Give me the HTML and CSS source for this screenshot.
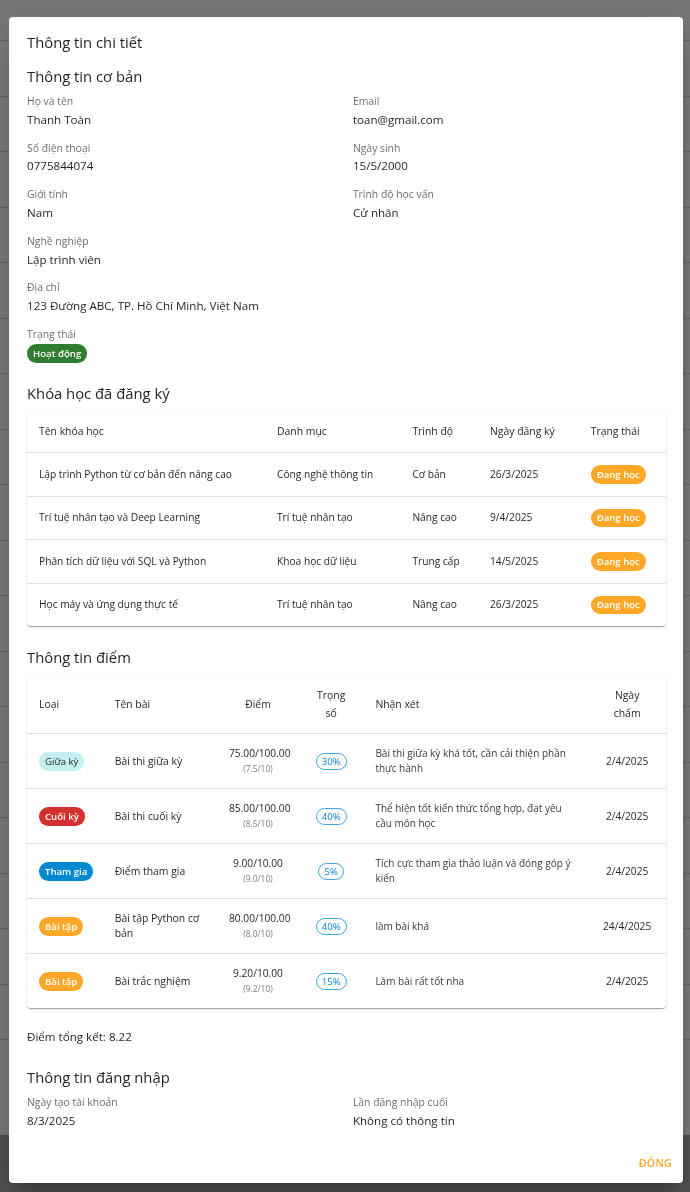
FILE: index.html
```html
<!DOCTYPE html>
<html lang="vi">
<head>
<meta charset="utf-8">
<title>Thông tin chi tiết</title>
<link rel="stylesheet" href="styles.css">
</head>
<body>
<div class="page">
  <div class="page-head"></div>
  <div class="page-row"></div><div class="page-row"></div><div class="page-row"></div><div class="page-row"></div>
  <div class="page-row"></div><div class="page-row"></div><div class="page-row"></div><div class="page-row"></div>
  <div class="page-row"></div><div class="page-row"></div><div class="page-row"></div><div class="page-row"></div>
  <div class="page-row"></div><div class="page-row"></div><div class="page-row"></div><div class="page-row"></div>
  <div class="page-row"></div><div class="page-row"></div>
</div>

<div class="backdrop">
  <div class="dialog">
    <h2 class="dialog-title">Thông tin chi tiết</h2>
    <div class="dialog-content">
      <section class="section">
        <h3 class="section-title">Thông tin cơ bản</h3>
        <div class="fields">
          <div class="field"><div class="label">Họ và tên</div><div class="value">Thanh Toàn</div></div>
          <div class="field"><div class="label">Email</div><div class="value">toan@gmail.com</div></div>
          <div class="field"><div class="label">Số điện thoại</div><div class="value">0775844074</div></div>
          <div class="field"><div class="label">Ngày sinh</div><div class="value">15/5/2000</div></div>
          <div class="field"><div class="label">Giới tính</div><div class="value">Nam</div></div>
          <div class="field"><div class="label">Trình độ học vấn</div><div class="value">Cử nhân</div></div>
          <div class="field"><div class="label">Nghề nghiệp</div><div class="value">Lập trình viên</div></div>
          <div class="field"></div>
          <div class="field full"><div class="label">Địa chỉ</div><div class="value">123 Đường ABC, TP. Hồ Chí Minh, Việt Nam</div></div>
          <div class="field full"><div class="label">Trạng thái</div><div class="chip-line"><span class="chip chip-green">Hoạt động</span></div></div>
        </div>
      </section>

      <section class="section">
        <h3 class="section-title">Khóa học đã đăng ký</h3>
        <div class="card">
          <table class="table courses">
            <colgroup>
              <col class="c-name"><col class="c-cat"><col class="c-level"><col class="c-date"><col class="c-status">
            </colgroup>
            <thead>
              <tr><th>Tên khóa học</th><th>Danh mục</th><th>Trình độ</th><th>Ngày đăng ký</th><th>Trạng thái</th></tr>
            </thead>
            <tbody>
              <tr><td>Lập trình Python từ cơ bản đến nâng cao</td><td>Công nghệ thông tin</td><td>Cơ bản</td><td>26/3/2025</td><td><span class="chip chip-orange">Đang học</span></td></tr>
              <tr><td>Trí tuệ nhân tạo và Deep Learning</td><td>Trí tuệ nhân tạo</td><td>Nâng cao</td><td>9/4/2025</td><td><span class="chip chip-orange">Đang học</span></td></tr>
              <tr><td>Phân tích dữ liệu với SQL và Python</td><td>Khoa học dữ liệu</td><td>Trung cấp</td><td>14/5/2025</td><td><span class="chip chip-orange">Đang học</span></td></tr>
              <tr><td>Học máy và ứng dụng thực tế</td><td>Trí tuệ nhân tạo</td><td>Nâng cao</td><td>26/3/2025</td><td><span class="chip chip-orange">Đang học</span></td></tr>
            </tbody>
          </table>
        </div>
      </section>

      <section class="section">
        <h3 class="section-title">Thông tin điểm</h3>
        <div class="card">
          <table class="table scores">
            <colgroup>
              <col class="s-type"><col class="s-name"><col class="s-score"><col class="s-weight"><col class="s-note"><col class="s-date">
            </colgroup>
            <thead>
              <tr><th>Loại</th><th>Tên bài</th><th class="center">Điểm</th><th class="center">Trọng số</th><th>Nhận xét</th><th class="center">Ngày chấm</th></tr>
            </thead>
            <tbody>
              <tr>
                <td><span class="chip chip-cyan">Giữa kỳ</span></td>
                <td class="name">Bài thi giữa kỳ</td>
                <td class="center"><div class="score">75.00/100.00</div><div class="sub">(7.5/10)</div></td>
                <td class="center"><span class="pct">30%</span></td>
                <td class="note">Bài thi giữa kỳ khá tốt, cần cải thiện phần thực hành</td>
                <td class="center">2/4/2025</td>
              </tr>
              <tr>
                <td><span class="chip chip-red">Cuối kỳ</span></td>
                <td class="name">Bài thi cuối kỳ</td>
                <td class="center"><div class="score">85.00/100.00</div><div class="sub">(8.5/10)</div></td>
                <td class="center"><span class="pct">40%</span></td>
                <td class="note">Thể hiện tốt kiến thức tổng hợp, đạt yêu cầu môn học</td>
                <td class="center">2/4/2025</td>
              </tr>
              <tr>
                <td><span class="chip chip-blue">Tham gia</span></td>
                <td class="name">Điểm tham gia</td>
                <td class="center"><div class="score">9.00/10.00</div><div class="sub">(9.0/10)</div></td>
                <td class="center"><span class="pct">5%</span></td>
                <td class="note">Tích cực tham gia thảo luận và đóng góp ý kiến</td>
                <td class="center">2/4/2025</td>
              </tr>
              <tr>
                <td><span class="chip chip-orange">Bài tập</span></td>
                <td class="name">Bài tập Python cơ bản</td>
                <td class="center"><div class="score">80.00/100.00</div><div class="sub">(8.0/10)</div></td>
                <td class="center"><span class="pct">40%</span></td>
                <td class="note">làm bài khá</td>
                <td class="center">24/4/2025</td>
              </tr>
              <tr>
                <td><span class="chip chip-orange">Bài tập</span></td>
                <td class="name">Bài trắc nghiệm</td>
                <td class="center"><div class="score">9.20/10.00</div><div class="sub">(9.2/10)</div></td>
                <td class="center"><span class="pct">15%</span></td>
                <td class="note">Làm bài rất tốt nha</td>
                <td class="center">2/4/2025</td>
              </tr>
            </tbody>
          </table>
        </div>
        <p class="total">Điểm tổng kết: 8.22</p>
      </section>

      <section class="section">
        <h3 class="section-title">Thông tin đăng nhập</h3>
        <div class="fields">
          <div class="field"><div class="label">Ngày tạo tài khoản</div><div class="value">8/3/2025</div></div>
          <div class="field"><div class="label">Lần đăng nhập cuối</div><div class="value">Không có thông tin</div></div>
        </div>
      </section>
    </div>
    <div class="dialog-actions">
      <button class="btn-close" type="button">Đóng</button>
    </div>
  </div>
</div>
</body>
</html>
```

FILE: styles.css
```css
* { box-sizing: border-box; }

html, body {
  margin: 0;
  padding: 0;
}

body {
  width: 690px;
  height: 1192px;
  overflow: hidden;
  background: #aaaaaa;
  font-family: "Open Sans", "Noto Sans", sans-serif;
  color: rgba(0, 0, 0, 0.87);
}

/* underlying page (dimmed by the backdrop) */
.page {
  height: 1135px;
  background: #ffffff;
  overflow: hidden;
}
.page-head {
  height: 41px;
  background: #f2f2f2;
  border-bottom: 1px solid #d4d4d4;
}
.page-row {
  height: 55.5px;
  border-bottom: 1px solid #d4d4d4;
}
.page-row:first-of-type { height: 82px; }

.backdrop {
  position: fixed;
  inset: 0;
  background: rgba(0, 0, 0, 0.5);
  padding: 16.7px 7px 0 9px;
}

.dialog {
  width: 674px;
  height: 1166.6px;
  background: #ffffff;
  border-radius: 4px;
  box-shadow: 0 11px 15px -7px rgba(0,0,0,.2), 0 24px 38px 3px rgba(0,0,0,.14), 0 9px 46px 8px rgba(0,0,0,.12);
  display: flex;
  flex-direction: column;
  overflow: hidden;
}

.dialog-title {
  margin: 0;
  padding: 13px 18px 8.3px;
  font-size: 14.8px;
  line-height: 25.6px;
  font-weight: 500;
  flex: none;
}

.dialog-content {
  flex: 1;
  min-height: 0;
  overflow: hidden;
  padding: 0 17px 0 18px;
}

.section { margin-bottom: 18.6px; }

.section-title {
  margin: 0 0 3.8px;
  font-size: 14.8px;
  line-height: 25.6px;
  font-weight: 500;
}

.fields {
  display: grid;
  grid-template-columns: 1fr 1fr;
  column-gap: 12.8px;
  row-gap: 10.6px;
}
.field.full { grid-column: 1 / -1; }

.label {
  font-size: 10.4px;
  line-height: 16.8px;
  color: rgba(0, 0, 0, 0.6);
}
.value {
  font-size: 11.6px;
  line-height: 19.2px;
}
.chip-line { padding-top: 1.5px; display: flex; }

.chip {
  display: inline-flex;
  align-items: center;
  height: 18.5px;
  padding: 0 6px;
  border-radius: 9.25px;
  font-size: 9.6px;
  font-weight: 600;
  color: #ffffff;
  white-space: nowrap;
  vertical-align: middle;
}
.chip-green { background: #2e7d32; }
.chip-orange { background: #ffa726; }
.chip-red { background: #d32f2f; }
.chip-blue { background: #0288d1; }
.chip-cyan { background: #c4f0ef; color: rgba(0,0,0,.87); font-weight: 400; }

.card {
  background: #ffffff;
  border-radius: 4px;
  box-shadow: 0 2px 1px -1px rgba(0,0,0,.2), 0 1px 1px 0 rgba(0,0,0,.14), 0 1px 3px 0 rgba(0,0,0,.12);
  overflow: hidden;
}

.table {
  width: 100%;
  border-collapse: collapse;
  table-layout: fixed;
  font-size: 10.2px;
}
.table th, .table td {
  padding: 12px;
  border-bottom: 1px solid #e0e0e0;
  text-align: left;
  vertical-align: middle;
}
.table tbody tr:last-child td { border-bottom: none; }
.table th {
  font-size: 10.4px;
  font-weight: 500;
  line-height: 18px;
  padding-top: 11.7px;
  padding-bottom: 11.6px;
}
.table td { line-height: 15px; }
.table .center { text-align: center; }

.courses td { height: 42px; }

.c-name { width: 238px; }
.c-cat { width: 135.4px; }
.c-level { width: 77.6px; }
.c-date { width: 100.7px; }
.c-status { width: 87.3px; }

.s-type { width: 75.7px; }
.s-name { width: 114.3px; }
.s-score { width: 82px; }
.s-weight { width: 64.4px; }
.s-note { width: 224.9px; }
.s-date { width: 77.7px; }

.scores td { height: 54px; }
.scores .name { font-weight: 500; font-size: 10.4px; }
.scores .note { font-size: 10px; color: rgba(0,0,0,.8); }
.score { font-size: 10.2px; line-height: 15px; }
.sub { font-size: 8.4px; line-height: 15px; color: rgba(0,0,0,.55); }

.pct {
  display: inline-flex;
  align-items: center;
  height: 17px;
  padding: 0 5px;
  border: 1px solid #3aa6e0;
  border-radius: 8.5px;
  font-size: 9.6px;
  color: #0288d1;
}

.total {
  margin: 18.9px 0 0;
  font-size: 11.6px;
  line-height: 19.2px;
}

.dialog-actions {
  flex: none;
  height: 40.3px;
  display: flex;
  justify-content: flex-end;
  align-items: center;
  padding: 0 6px;
}
.btn-close {
  border: none;
  background: transparent;
  font-family: inherit;
  font-size: 10.6px;
  font-weight: 600;
  text-transform: uppercase;
  letter-spacing: 0.3px;
  color: #ffa726;
  padding: 6px 5px;
  line-height: 17px;
}
```
